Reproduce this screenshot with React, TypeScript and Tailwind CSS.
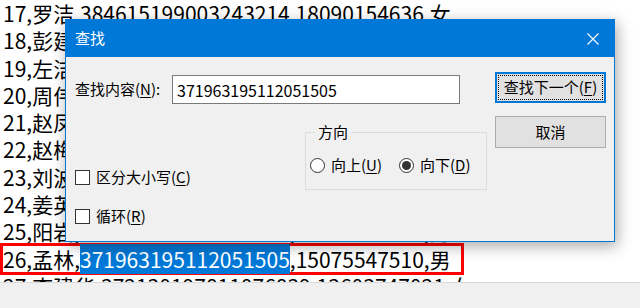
const lines = [
  '17,罗洁,384615199003243214,18090154636,女',
  '18,彭建国,430102198507121536,13874120365,男',
  '19,左洁,510104199211083427,15982036741,女',
  '20,周伟,320106198803150919,13951703628,男',
  '21,赵凤,410105199512247820,18637125490,女',
  '22,赵梅,370202199006184526,15863097412,女',
  '23,刘波,110105198712030611,13801126754,男',
  '24,姜英,210102199304256823,13940087215,女',
  '25,阳岩,440103198910112714,13711543028,男',
];

function U({ children }: { children: string }) {
  return <span className="underline underline-offset-2">{children}</span>;
}

function Checkbox({ label, hot }: { label: string; hot: string }) {
  return (
    <div className="flex items-center gap-[6px] h-[16px]">
      <span className="w-[15px] h-[15px] border border-[#333333] bg-white" />
      <span>
        {label}(<U>{hot}</U>)
      </span>
    </div>
  );
}

function Radio({ label, hot, checked }: { label: string; hot: string; checked?: boolean }) {
  return (
    <div className="flex items-center gap-[6px]">
      <span className="w-[15px] h-[15px] rounded-full border border-[#333333] bg-white flex items-center justify-center">
        {checked && <span className="w-[9px] h-[9px] rounded-full bg-[#333333]" />}
      </span>
      <span>
        {label}(<U>{hot}</U>)
      </span>
    </div>
  );
}

function FindDialog() {
  return (
    <div className="absolute left-[65px] top-[19px] w-[550px] h-[223px] border border-[#0078d7] bg-[#f0f0f0] shadow-[2px_4px_14px_rgba(0,0,0,0.35)] flex flex-col text-[15px] text-black font-['Noto_Sans_CJK_SC','Microsoft_YaHei',sans-serif]">
      <div className="h-[37px] bg-[#0078d7] flex items-center justify-between pl-[9px] pr-[14px] text-white">
        <span>查找</span>
        <svg width="12" height="12" viewBox="0 0 12 12" className="mr-[1px]">
          <path d="M0.5 0.5 L11.5 11.5 M11.5 0.5 L0.5 11.5" stroke="white" strokeWidth="1.1" />
        </svg>
      </div>
      <div className="flex-1 flex pl-[9px] pr-[7px] pt-[15px]">
        <div className="w-[412px] flex flex-col">
          <div className="flex items-center mt-[3px]">
            <span className="w-[97px]">
              查找内容(<U>N</U>):
            </span>
            <div className="w-[288px] h-[29px] border border-[#7a7a7a] bg-white flex items-center pl-[4px] text-[16px]">
              371963195112051505
            </div>
          </div>
          <div className="flex">
            <div className="w-[230px] flex flex-col gap-[23px] pt-[65px]">
              <Checkbox label="区分大小写" hot="C" />
              <Checkbox label="循环" hot="R" />
            </div>
            <fieldset className="mt-[18px] w-[182px] h-[68px] border border-[#dcdcdc] px-[4px] pt-[12px] m-0">
              <legend className="ml-[5px] px-[3px] leading-[20px]">方向</legend>
              <div className="flex items-center gap-[17px]">
                <Radio label="向上" hot="U" />
                <Radio label="向下" hot="D" checked />
              </div>
            </fieldset>
          </div>
        </div>
        <div className="ml-[8px] flex flex-col gap-[13px]">
          <div className="relative w-[111px] h-[31px] border-2 border-[#0078d7] bg-[#e1e1e1] flex items-center justify-center">
            <span className="absolute inset-[1px] border border-dotted border-black" />
            <span>
              查找下一个(<U>F</U>)
            </span>
          </div>
          <div className="w-[111px] h-[32px] border border-[#adadad] bg-[#e1e1e1] flex items-center justify-center">
            取消
          </div>
        </div>
      </div>
    </div>
  );
}

export default function App() {
  return (
    <div className="relative w-[640px] h-[308px] bg-white overflow-hidden font-['Noto_Sans_CJK_SC','Microsoft_YaHei',sans-serif]">
      <div className="h-[282px] overflow-hidden pl-[3px] text-[21px] leading-[27.3px] text-black whitespace-nowrap">
        {lines.map((l) => (
          <div key={l}>{l}</div>
        ))}
        <div className="relative">
          <span className="absolute left-[-3px] top-[-3px] w-[464px] h-[32px] border-[3px] border-[#ff0000]" />
          <span className="relative">
            26,孟林,<span className="bg-[#0078d7] text-white">371963195112051505</span>,15075547510,男
          </span>
        </div>
        <div>27,李建华,372130197811076839,13603747021,女</div>
      </div>
      <div className="h-[26px] bg-[#f0f0f0] border-t border-[#d9d9d9]" />
      <FindDialog />
    </div>
  );
}
